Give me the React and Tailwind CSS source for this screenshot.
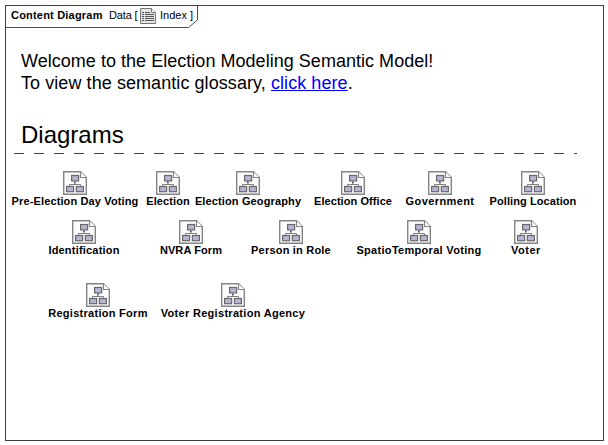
import React from "react";

function DiagramIcon() {
  return (
    <svg width="24" height="24" viewBox="0 0 24 24" className="block shrink-0">
      <path d="M.7.7H17.5L23.3 6.5V23.3H.7Z" fill="#fcfcfc" stroke="#858585" strokeWidth="1.4" />
      <path d="M17.5.7V6.5H23.3" fill="#fff" stroke="#858585" strokeWidth="1.2" />
      <path d="M11.8 10v3M6.5 15.5V13.5H17.5V15.5" fill="none" stroke="#808080" />
      <g fill="#b4b6d3" stroke="#686868" strokeWidth="1.2">
        <rect x="8.6" y="4.5" width="7" height="5.4" />
        <rect x="3.6" y="15.5" width="7" height="5.2" />
        <rect x="13.4" y="15.5" width="7" height="5.2" />
      </g>
      <path d="M10.8 11h2.2l-1 1.6z" fill="#444" />
    </svg>
  );
}

function IndexIcon() {
  return (
    <svg width="16" height="16" viewBox="0 0 16 16" className="block shrink-0">
      <path d="M.5.5H11.5L15.5 4.5V15.5H.5Z" fill="#e4e4e4" stroke="#777" />
      <path d="M11.5.5V4.5H15.5" fill="#fff" stroke="#777" />
      <path d="M2 4.5h2M2 6.5h2M2 8.5h2M2 10.5h2M2 12.5h2M5 4.5h5M5 6.5h9M5 8.5h9M5 10.5h9M5 12.5h9" stroke="#555" />
    </svg>
  );
}

const rows = [
  {
    className: "mt-[17px]",
    items: [
      ["Pre-Election Day Voting", "ml-[6px] w-[126px]", "tracking-[0.13px]"],
      ["Election", "ml-[8px] w-[44px]", "tracking-[0.1px]"],
      ["Election Geography", "ml-[5px] w-[106px]", "tracking-[0.13px]"],
      ["Election Office", "ml-[13px] w-[78px]", "tracking-[0.07px]"],
      ["Government", "ml-[13px] w-[70px]", "tracking-[0.4px]"],
      ["Polling Location", "ml-[14px] w-[88px]", "tracking-[0.08px]"],
    ],
  },
  {
    className: "mt-[11px]",
    items: [
      ["Identification", "ml-[42px] w-[72px]", "tracking-[0.2px]"],
      ["NVRA Form", "ml-[40px] w-[62px]", "tracking-[0.1px]"],
      ["Person in Role", "ml-[29px] w-[80px]", "tracking-[0.2px]"],
      ["SpatioTemporal Voting", "ml-[25px] w-[126px]", "tracking-[0.3px]"],
      ["Voter", "ml-[28px] w-[32px]", "tracking-[0.5px]"],
    ],
  },
  {
    className: "mt-[25px]",
    items: [
      ["Registration Form", "ml-[42px] w-[100px]", "tracking-[0.28px]"],
      ["Voter Registration Agency", "ml-[12px] w-[146px]", "tracking-[0.3px]"],
    ],
  },
];

export default function App() {
  return (
    <div className="h-[445px] w-[608px] bg-white p-[5px] font-['Liberation_Sans',Arial,sans-serif] text-black">
      <main className="flex h-[436px] w-[599px] flex-col border border-[#404040]">
        <header className="relative flex h-[21px] w-[192px] shrink-0 items-center text-[11px] leading-[14px] whitespace-pre">
          <svg width="193" height="22" className="absolute top-0 left-0">
            <path d="M0 21.5H182.5L191.5 14V0" fill="none" stroke="#505050" />
          </svg>
          <span className="-mt-[4px] ml-[5px] w-[98px] font-bold tracking-[0.2px]">Content Diagram</span>
          <span className="-mt-[4px] w-[31px] tracking-[-0.15px]">Data [</span>
          <div className="-mt-[1px]">
            <IndexIcon />
          </div>
          <span className="-mt-[4px] ml-[4px] tracking-[0px]">Index ]</span>
        </header>
        <section className="mt-[23px] ml-[15px] text-[18px] leading-[22px] whitespace-nowrap">
          <p className="tracking-[0.03px]">Welcome to the Election Modeling Semantic Model!</p>
          <p className="tracking-[0.07px]">
            To view the semantic glossary, <a className="text-[#0000ff] underline">click here</a>.
          </p>
        </section>
        <h1 className="mt-[26px] ml-[15px] h-[31px] text-[24px] leading-[30px]">Diagrams</h1>
        <svg width="563" height="1" className="mt-[2px] ml-[8px] block shrink-0">
          <path d="M0 .5H563" stroke="#404040" strokeDasharray="10 10" />
        </svg>
        {rows.map((row) => (
          <div key={row.className} className={`flex shrink-0 ${row.className}`}>
            {row.items.map(([label, box, tracking]) => (
              <div key={label} className={`flex h-[38px] shrink-0 flex-col items-center ${box}`}>
                <DiagramIcon />
                <span className={`-mt-px text-[11px] leading-[14px] font-bold whitespace-nowrap ${tracking}`}>
                  {label}
                </span>
              </div>
            ))}
          </div>
        ))}
      </main>
    </div>
  );
}
